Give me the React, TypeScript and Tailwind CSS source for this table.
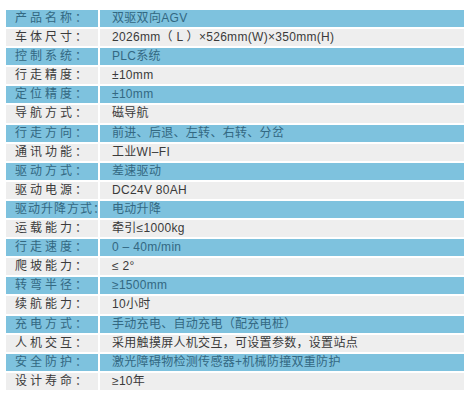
const rows: { label: string; value: string; tight?: boolean }[] = [
  { label: '产品名称：', value: '双驱双向AGV' },
  { label: '车体尺寸：', value: '2026mm（ L ）×526mm(W)×350mm(H)' },
  { label: '控制系统：', value: 'PLC系统' },
  { label: '行走精度：', value: '±10mm' },
  { label: '定位精度：', value: '±10mm' },
  { label: '导航方式：', value: '磁导航' },
  { label: '行走方向：', value: '前进、后退、左转、右转、分岔' },
  { label: '通讯功能：', value: '工业WI–FI' },
  { label: '驱动方式：', value: '差速驱动' },
  { label: '驱动电源：', value: 'DC24V 80AH' },
  { label: '驱动升降方式：', value: '电动升降', tight: true },
  { label: '运载能力：', value: '牵引≤1000kg' },
  { label: '行走速度：', value: '0 – 40m/min' },
  { label: '爬坡能力：', value: '≤ 2°' },
  { label: '转弯半径：', value: '≥1500mm' },
  { label: '续航能力：', value: '10小时' },
  { label: '充电方式：', value: '手动充电、自动充电（配充电桩）' },
  { label: '人机交互：', value: '采用触摸屏人机交互，可设置参数，设置站点' },
  { label: '安全防护：', value: '激光障碍物检测传感器+机械防撞双重防护' },
  { label: '设计寿命：', value: '≥10年' },
]

export default function App() {
  return (
    <div
      className="w-[472px] h-[400px] bg-white pt-[10px] pl-[6px] pr-[8px]"
      style={{ fontFamily: '"Liberation Sans", "Noto Sans CJK SC", sans-serif' }}
    >
      <div className="flex flex-col gap-[2px]">
        {rows.map((row, i) => {
          const blue = i % 2 === 0
          const cell = blue ? 'bg-[#7ec2de] text-[#336882]' : 'bg-[#eeeeee] text-[#3a3a3a]'
          return (
            <div key={row.label} className="flex h-[17.1px] gap-[2px] text-[12px] leading-[17px]">
              <div
                className={`w-[92px] shrink-0 pl-[9px] whitespace-nowrap ${cell} ${
                  row.tight ? 'tracking-[1px]' : 'tracking-[3px]'
                }`}
              >
                {row.label}
              </div>
              <div className={`flex-1 pl-[12px] whitespace-nowrap tracking-[0.3px] ${cell}`}>
                {row.value}
              </div>
            </div>
          )
        })}
      </div>
    </div>
  )
}
